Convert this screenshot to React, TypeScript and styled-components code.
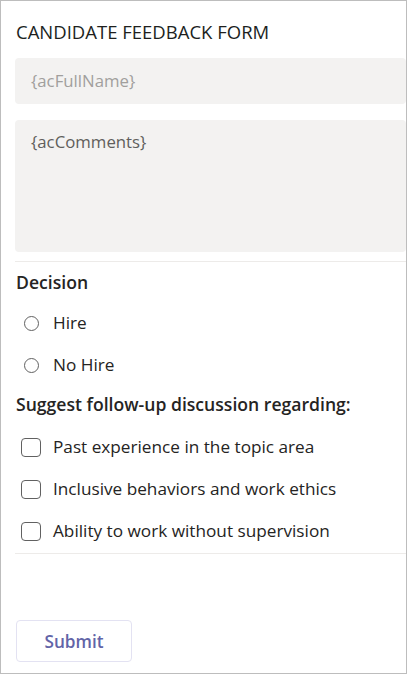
import React, { useState } from 'react';
import styled, { createGlobalStyle } from 'styled-components';

const GlobalStyle = createGlobalStyle`
  html, body {
    margin: 0;
    padding: 0;
    background: #fff;
  }
  * {
    box-sizing: border-box;
  }
`;

const Frame = styled.main`
  width: 407px;
  height: 674px;
  border: 1px solid #bdbdbd;
  padding: 19px 0 0 14px;
  display: flex;
  flex-direction: column;
  font-family: 'Open Sans', 'Noto Sans', sans-serif;
  color: #252423;
  overflow: hidden;
`;

const Title = styled.h1`
  margin: 0 0 0 1px;
  font-size: 18.5px;
  font-weight: 400;
  line-height: 24px;
  color: #201f1e;
  white-space: nowrap;
`;

const Field = styled.div<{ tall?: boolean; dark?: boolean }>`
  margin-top: ${(p) => (p.tall ? '16px' : '14px')};
  height: ${(p) => (p.tall ? '132px' : '46px')};
  background: #f3f2f1;
  border-radius: 4px;
  padding: ${(p) => (p.tall ? '10px 16px' : '11px 16px')};
  font-size: 16.8px;
  line-height: 24px;
  color: ${(p) => (p.dark ? '#605e5c' : '#a19f9d')};
`;

const Divider = styled.hr<{ gap: number }>`
  margin: ${(p) => p.gap}px 0 0 0;
  border: none;
  border-top: 1px solid #edebe9;
`;

const SectionLabel = styled.div<{ gap: number }>`
  margin: ${(p) => p.gap}px 0 0 1px;
  font-size: 17.6px;
  font-weight: 600;
  line-height: 24px;
  white-space: nowrap;
`;

const OptionList = styled.div<{ gap: number }>`
  margin-top: ${(p) => p.gap}px;
  display: flex;
  flex-direction: column;
`;

const OptionRow = styled.label`
  height: 42px;
  display: flex;
  align-items: center;
  font-size: 17.2px;
  line-height: 24px;
  white-space: nowrap;
  cursor: pointer;
`;

const OptionText = styled.span`
  margin-top: -1px;
`;

const RadioCircle = styled.span<{ checked: boolean }>`
  width: 15px;
  height: 15px;
  margin: 0 14px 0 9px;
  border-radius: 50%;
  border: 1.5px solid #616161;
  display: flex;
  align-items: center;
  justify-content: center;
  &::after {
    content: '';
    width: 7px;
    height: 7px;
    border-radius: 50%;
    background: ${(p) => (p.checked ? '#616161' : 'transparent')};
  }
`;

const CheckBox = styled.span<{ checked: boolean }>`
  width: 20px;
  height: 19px;
  margin: 0 12px 0 6px;
  border-radius: 4px;
  border: 1.5px solid #616161;
  background: ${(p) => (p.checked ? '#6264a7' : '#fff')};
`;

const Footer = styled.div`
  margin-top: auto;
  padding: 0 0 11px 1px;
`;

const SubmitButton = styled.button`
  width: 116px;
  height: 42px;
  background: #fff;
  border: 1px solid #e3e2f2;
  border-radius: 4px;
  color: #6264a7;
  font-family: 'Open Sans', 'Noto Sans', sans-serif;
  font-size: 17.2px;
  font-weight: 600;
  cursor: pointer;
`;

const decisions = ['Hire', 'No Hire'];
const topics = [
  'Past experience in the topic area',
  'Inclusive behaviors and work ethics',
  'Ability to work without supervision',
];

export default function App(): JSX.Element {
  const [decision, setDecision] = useState('');
  const [picked, setPicked] = useState<string[]>([]);

  const toggle = (t: string) => {
    setPicked((cur) => (cur.includes(t) ? cur.filter((x) => x !== t) : [...cur, t]));
  };

  return (
    <>
      <GlobalStyle />
      <Frame>
        <Title>CANDIDATE FEEDBACK FORM</Title>
        <Field>{'{acFullName}'}</Field>
        <Field tall dark>{'{acComments}'}</Field>
        <Divider gap={9} />
        <SectionLabel gap={8}>Decision</SectionLabel>
        <OptionList gap={8}>
          {decisions.map((d) => (
            <OptionRow key={d} onClick={() => setDecision(d)}>
              <RadioCircle checked={decision === d} />
              <OptionText>{d}</OptionText>
            </OptionRow>
          ))}
        </OptionList>
        <SectionLabel gap={6}>Suggest follow-up discussion regarding:</SectionLabel>
        <OptionList gap={10}>
          {topics.map((t) => (
            <OptionRow key={t} onClick={() => toggle(t)}>
              <CheckBox checked={picked.includes(t)} />
              <OptionText>{t}</OptionText>
            </OptionRow>
          ))}
        </OptionList>
        <Divider gap={1} />
        <Footer>
          <SubmitButton>Submit</SubmitButton>
        </Footer>
      </Frame>
    </>
  );
}
